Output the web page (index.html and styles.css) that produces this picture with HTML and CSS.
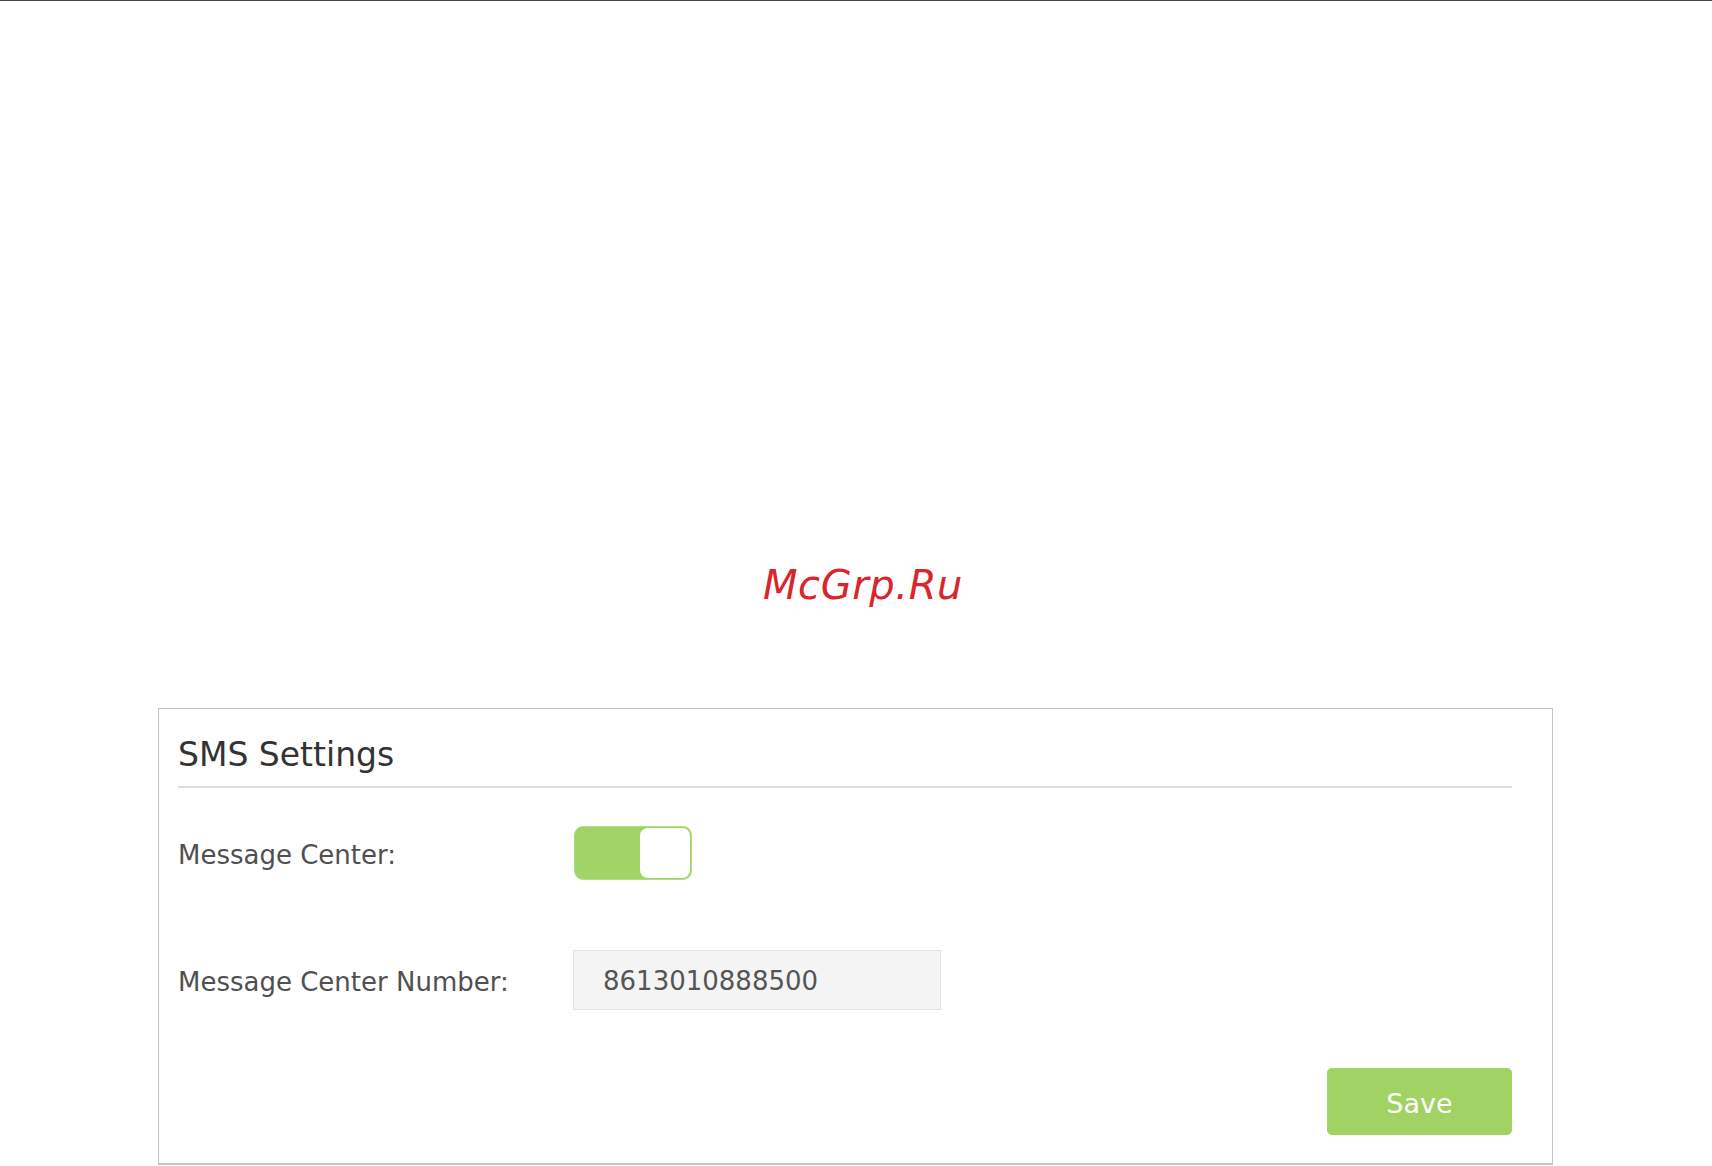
FILE: index.html
```html
<!DOCTYPE html>
<html lang="en">
<head>
<meta charset="utf-8">
<title>SMS Settings</title>
<link rel="stylesheet" href="styles.css">
</head>
<body>
<div class="top-line"></div>
<div class="watermark">McGrp.Ru</div>
<section class="panel">
  <h2 class="panel-title">SMS Settings</h2>
  <div class="form-row row-toggle">
    <span class="label">Message Center:</span>
    <div class="toggle"><span class="knob"></span></div>
  </div>
  <div class="form-row row-number">
    <span class="label">Message Center Number:</span>
    <div class="input">8613010888500</div>
  </div>
  <div class="actions">
    <button class="btn-save">Save</button>
  </div>
</section>
</body>
</html>
```
FILE: styles.css
```css
html, body {
  margin: 0;
  padding: 0;
  background: #ffffff;
}
body {
  font-family: "DejaVu Sans", Verdana, sans-serif;
  width: 1712px;
  height: 1166px;
  overflow: hidden;
}
.top-line {
  height: 1px;
  background: #444444;
}
.watermark {
  margin-top: 560px;
  text-align: center;
  padding-left: 14px;
  font-size: 40px;
  line-height: 48px;
  font-style: italic;
  letter-spacing: 0.6px;
  color: #d9252b;
}
.panel {
  margin: 99px 0 0 158px;
  width: 1334px;
  border: 1px solid #c4c4c4;
  border-bottom-width: 2px;
  padding: 27px 40px 28px 19px;
}
.panel-title {
  margin: 0;
  font-size: 33px;
  line-height: 38px;
  font-weight: normal;
  color: #333333;
  padding-bottom: 12px;
  border-bottom: 2px solid #dedede;
}
.form-row {
  display: flex;
  align-items: center;
}
.row-toggle {
  margin-top: 38px;
}
.row-number {
  margin-top: 70px;
}
.label {
  width: 396px;
  padding-top: 3px;
  font-size: 26px;
  color: #505050;
}
.toggle {
  box-sizing: border-box;
  width: 118px;
  height: 54px;
  border-radius: 9px;
  background: #a0d468;
  border: 1px solid #b4dd8a;
  padding: 1px;
  display: flex;
  justify-content: flex-end;
}
.knob {
  width: 50px;
  height: 50px;
  border-radius: 8px;
  background: #ffffff;
}
.input {
  box-sizing: border-box;
  margin-left: -1px;
  width: 368px;
  height: 60px;
  padding-top: 2px;
  background: #f4f4f4;
  border: 1px solid #e3e3e3;
  padding-left: 29px;
  display: flex;
  align-items: center;
  font-size: 26px;
  color: #555555;
}
.actions {
  display: flex;
  justify-content: flex-end;
  margin-top: 58px;
}
.btn-save {
  width: 185px;
  height: 67px;
  border: none;
  border-radius: 5px;
  background: #a1d264;
  color: #ffffff;
  font-family: "DejaVu Sans", Verdana, sans-serif;
  font-size: 27px;
  padding: 4px 0 0 0;
}
```
